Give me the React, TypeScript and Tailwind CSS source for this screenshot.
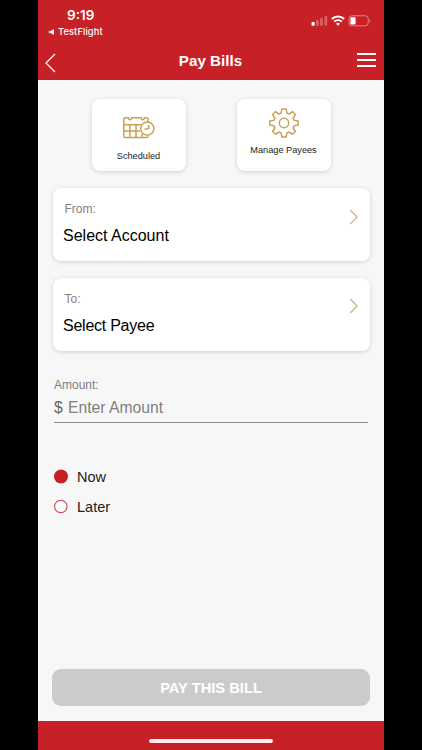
import { type ReactNode, useState } from "react";

interface TileProps {
  label: string;
  className: string;
  children: ReactNode;
}

interface PickerCardProps {
  label: string;
  value: ReactNode;
}

interface RadioOptionProps {
  label: string;
  checked: boolean;
  onSelect: () => void;
}

function StatusIcons() {
  return (
    <div className="flex items-start">
      <svg width="17" height="11" viewBox="0 0 17 11" fill="#fff">
        <rect x="0.5" y="7" width="3.2" height="3.8" rx="0.8" />
        <rect x="5" y="5" width="2.8" height="5.8" rx="0.7" opacity="0.28" />
        <rect x="9" y="2.8" width="2.8" height="8" rx="0.7" opacity="0.28" />
        <rect x="13.4" y="1" width="2.8" height="9.8" rx="0.7" opacity="0.28" />
      </svg>
      <svg className="ml-[3px]" width="14" height="11" viewBox="0 0 14 11" fill="none" stroke="#fff">
        <path d="M.9 4.1a8.6 8.6 0 0 1 12.2 0" strokeWidth="2.1" />
        <path d="M3.2 6.7a5.4 5.4 0 0 1 7.6 0" strokeWidth="1.8" />
        <path d="M5 8.7a3 3 0 0 1 4 0L7 10.8Z" fill="#fff" stroke="none" />
      </svg>
      <svg className="ml-[3px]" width="23" height="12" viewBox="0 0 23 12" fill="none">
        <rect x="1" y="0.8" width="19.2" height="10" rx="2.8" stroke="#fff" strokeOpacity="0.45" />
        <rect x="2.4" y="2.2" width="5.2" height="7.2" rx="1.2" fill="#fff" />
        <path d="M21.5 4.2v3.2c.6-.3 1-.9 1-1.6s-.4-1.3-1-1.6Z" fill="#fff" fillOpacity="0.5" />
      </svg>
    </div>
  );
}

function CalendarIcon() {
  return (
    <svg width="32" height="23" viewBox="0 0 32 23" fill="none" stroke="#c8a058" strokeWidth="1.5">
      <path d="M25 6V3q0-1.2-1.2-1.2h-2.5q-.2 2-1.6 2t-1.6-2H8.6q-.2 2-1.6 2t-1.6-2H2Q.8 1.8.8 3v17.2q0 1.2 1.2 1.2h21.8q1.2 0 1.2-1.2" />
      <path d="M.8 8.8h17M.8 15h16.5M6.9 8.8v12.6M13 8.8v12.6M19.1 18v3.4" />
      <circle cx="24.3" cy="12.6" r="6.6" />
      <path d="M25.8 9v3.2l-4.2 1.3" />
    </svg>
  );
}

function GearIcon() {
  return (
    <svg width="30" height="30" viewBox="0 0 30 30" fill="none" stroke="#c8a058" strokeWidth="1.5" strokeLinejoin="round">
      <path d="M12.9 1h4.2l.8 4.1 2.2.9 3.5-2.3 2.8 2.8-2.3 3.5.9 2.2 4.2.8v4l-4.2.8-.9 2.2 2.3 3.5-2.8 2.8-3.5-2.3-2.2.9-.8 4.1h-4.2l-.8-4.1-2.2-.9-3.5 2.3-2.8-2.8 2.3-3.5-.9-2.2-4.2-.8v-4l4.2-.8.9-2.2-2.3-3.5 2.8-2.8L9.9 6l2.2-.9Z" />
      <circle cx="15" cy="15" r="4.7" />
    </svg>
  );
}

function Tile({ label, className, children }: TileProps) {
  return (
    <button
      type="button"
      className={`flex h-[72px] w-[94px] flex-col items-center rounded-lg bg-white text-[9.2px] leading-3 text-[#222] shadow-[0_1px_4px_rgba(0,0,0,0.16)] ${className}`}
    >
      {children}
      {label}
    </button>
  );
}

function PickerCard({ label, value }: PickerCardProps) {
  return (
    <button
      type="button"
      className="flex h-[73px] w-full items-start justify-between rounded-lg bg-white pl-[10.5px] pr-[11px] text-left shadow-[0_1px_4px_rgba(0,0,0,0.16)]"
    >
      <span className="flex flex-col pt-[13px]">
        <span className="pl-[1.5px] text-xs leading-4 text-[#808080]">{label}</span>
        <span className="mt-[9px] text-base leading-5 text-black">{value}</span>
      </span>
      <svg className="mt-[20.5px]" width="10" height="16" viewBox="0 0 10 16" fill="none" stroke="#cdb47c" strokeWidth="1.2">
        <path d="m1.2 1 7 7-7 7" />
      </svg>
    </button>
  );
}

function RadioOption({ label, checked, onSelect }: RadioOptionProps) {
  return (
    <button type="button" role="radio" aria-checked={checked} onClick={onSelect} className="flex h-[30px] items-center">
      <svg width="15" height="15" viewBox="0 0 15 15">
        {checked ? (
          <circle cx="7" cy="7.5" r="7" fill="#c82027" />
        ) : (
          <circle cx="6.8" cy="7.5" r="6.2" fill="#fff" stroke="#d0434c" strokeWidth="1.1" />
        )}
      </svg>
      <span className="ml-2 text-[14.5px] leading-5 text-[#222]">{label}</span>
    </button>
  );
}

export default function App() {
  const [when, setWhen] = useState("Now");

  return (
    <div className="flex h-[750px] w-[422px] justify-center bg-black font-['Liberation_Sans',sans-serif]">
      <div className="flex w-[346px] flex-col bg-[#f7f7f7]">
        <header className="h-20 bg-[#c82027] text-white">
          <div className="flex h-10 justify-between pl-[10px] pr-[13px] font-['Inter',sans-serif]">
            <div className="flex flex-col pt-[7px]">
              <span className="ml-[19px] text-[13.5px] font-semibold leading-4">9:19</span>
              <span className="mt-[3px] flex items-center text-[9.3px] font-medium leading-3 tracking-[0.1px]">
                <svg className="mr-1" width="6" height="6" viewBox="0 0 6 6" fill="#fff">
                  <path d="M0 3 6 .2v5.6Z" />
                </svg>
                TestFlight
              </span>
            </div>
            <div className="pt-[15px]">
              <StatusIcons />
            </div>
          </div>
          <div className="grid h-10 grid-cols-3 items-center pl-[7px] pr-[8px]">
            <button type="button" aria-label="Back" className="mt-[5px] justify-self-start">
              <svg width="11" height="20" viewBox="0 0 11 20" fill="none" stroke="#fff" strokeWidth="1.2">
                <path d="M10 1 1 10l9 9" />
              </svg>
            </button>
            <h1 className="justify-self-center whitespace-nowrap pt-px text-[15.2px] font-bold leading-5">Pay Bills</h1>
            <button type="button" aria-label="Open menu" className="flex flex-col gap-1 justify-self-end">
              <span className="h-[2px] w-[19px] bg-white" />
              <span className="h-[2px] w-[19px] bg-white" />
              <span className="h-[2px] w-[19px] bg-white" />
            </button>
          </div>
        </header>

        <main className="flex flex-1 flex-col px-[14px]">
          <div className="mt-[19px] flex justify-center gap-[51px]">
            <Tile label="Scheduled" className="gap-[11px] pt-[17px]">
              <CalendarIcon />
            </Tile>
            <Tile label="Manage Payees" className="gap-1.5 pt-[9px]">
              <GearIcon />
            </Tile>
          </div>

          <div className="mt-[17px] flex flex-col gap-[16.5px] px-[0.5px]">
            <PickerCard label="From:" value="Select Account" />
            <PickerCard label="To:" value={<span className="tracking-[-0.25px]">Select Payee</span>} />
          </div>

          <label className="mx-[2px] mt-[26.5px] flex flex-col text-xs leading-4 text-[#808080]">
            Amount:
            <span className="mt-1 flex h-[26px] items-start border-b border-[#8c8c8c] pt-px text-[15.7px] leading-5">
              <span className="w-[14px] text-[#666]">$</span>
              <input
                placeholder="Enter Amount"
                className="min-w-0 flex-1 bg-transparent leading-5 outline-none placeholder:text-[#808080]"
              />
            </span>
          </label>

          <div role="radiogroup" className="mt-[38.5px] flex flex-col items-start pl-[2px]">
            <RadioOption label="Now" checked={when === "Now"} onSelect={() => setWhen("Now")} />
            <RadioOption label="Later" checked={when === "Later"} onSelect={() => setWhen("Later")} />
          </div>

          <button
            type="button"
            className="mb-[15px] mt-auto h-[37px] w-full rounded-[9px] bg-[#cbcbcb] pt-px text-[14.7px] font-bold text-white"
          >
            PAY THIS BILL
          </button>
        </main>

        <footer className="flex h-[29px] justify-center bg-[#c82027] pt-[18px]">
          <div className="h-1 w-[124px] rounded-full bg-[#ffecec]" />
        </footer>
      </div>
    </div>
  );
}
